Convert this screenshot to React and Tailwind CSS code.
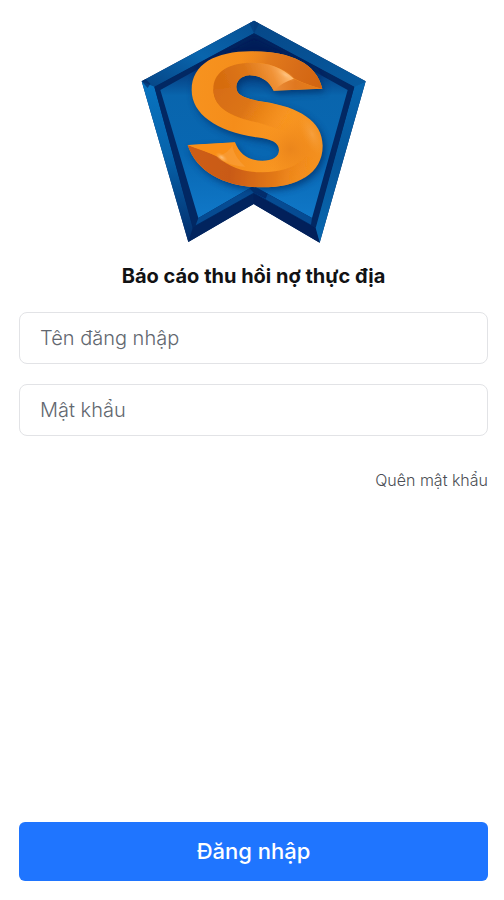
import React, { useState } from 'react'

const S_SHAPE =
  'M576 234 L430 240 C416 208 388 194 358 194 C332 195 318 212 318 229 C318 254 342 264 400 273 C505 289 577 330 577 405 C577 490 500 530 395 530 C290 530 200 488 172 403 L314 395 C328 430 352 450 396 450 C426 450 446 440 446 418 C446 396 425 386 378 380 C258 362 184 310 184 238 C184 160 256 122 362 122 C478 122 558 156 576 234 Z'

function Logo() {
  return (
    <svg viewBox="32 28 678 672" className="w-[226px] h-56" role="img" aria-label="Logo">
      <defs>
        <linearGradient id="face" x1="0" y1="0" x2="0" y2="1">
          <stop offset="0" stopColor="#02205a" />
          <stop offset="0.16" stopColor="#053577" />
          <stop offset="0.32" stopColor="#0965ad" />
          <stop offset="0.65" stopColor="#0867b2" />
          <stop offset="1" stopColor="#1078c8" />
        </linearGradient>
        <linearGradient id="topLeftEdge" x1="1" y1="0" x2="0" y2="1">
          <stop offset="0" stopColor="#075093" />
          <stop offset="0.5" stopColor="#0965ad" />
          <stop offset="1" stopColor="#064484" />
        </linearGradient>
        <linearGradient id="topRightEdge" x1="0" y1="0" x2="1" y2="1">
          <stop offset="0" stopColor="#064788" />
          <stop offset="1" stopColor="#075a9f" />
        </linearGradient>
        <linearGradient id="leftEdge" x1="0" y1="0" x2="0" y2="1">
          <stop offset="0" stopColor="#0873c0" />
          <stop offset="0.45" stopColor="#0764ac" />
          <stop offset="1" stopColor="#032d6b" />
        </linearGradient>
        <linearGradient id="rightEdge" x1="0" y1="0" x2="0" y2="1">
          <stop offset="0" stopColor="#0764ad" />
          <stop offset="0.5" stopColor="#06569b" />
          <stop offset="1" stopColor="#0968b0" />
        </linearGradient>
        <linearGradient id="body" x1="0" y1="0" x2="1" y2="0.25">
          <stop offset="0" stopColor="#f79420" />
          <stop offset="0.45" stopColor="#f58d1a" />
          <stop offset="0.8" stopColor="#f99722" />
          <stop offset="1" stopColor="#f3901f" />
        </linearGradient>
        <linearGradient id="topCap" gradientUnits="userSpaceOnUse" x1="320" y1="130" x2="570" y2="230">
          <stop offset="0" stopColor="#f28d20" stopOpacity="0" />
          <stop offset="0.35" stopColor="#e27a1b" />
          <stop offset="0.7" stopColor="#d76c18" />
          <stop offset="1" stopColor="#d2640f" />
        </linearGradient>
        <linearGradient id="innerTop" gradientUnits="userSpaceOnUse" x1="300" y1="270" x2="480" y2="190">
          <stop offset="0" stopColor="#d66c10" />
          <stop offset="0.4" stopColor="#dd7617" />
          <stop offset="0.75" stopColor="#f09236" />
          <stop offset="1" stopColor="#ffbc74" />
        </linearGradient>
        <linearGradient id="middle" gradientUnits="userSpaceOnUse" x1="270" y1="220" x2="480" y2="350">
          <stop offset="0" stopColor="#d76d12" />
          <stop offset="0.4" stopColor="#dc7413" />
          <stop offset="1" stopColor="#f58f1c" stopOpacity="0" />
        </linearGradient>
        <linearGradient id="topFacet" gradientUnits="userSpaceOnUse" x1="440" y1="230" x2="575" y2="232">
          <stop offset="0" stopColor="#e98a35" />
          <stop offset="0.4" stopColor="#e07820" />
          <stop offset="1" stopColor="#e67c16" />
        </linearGradient>
        <linearGradient id="bottomCap" gradientUnits="userSpaceOnUse" x1="200" y1="440" x2="545" y2="480">
          <stop offset="0" stopColor="#cd5d14" />
          <stop offset="0.3" stopColor="#c95a13" />
          <stop offset="0.7" stopColor="#e47a17" />
          <stop offset="1" stopColor="#f28b1b" stopOpacity="0" />
        </linearGradient>
        <radialGradient id="lowShade" gradientUnits="userSpaceOnUse" cx="480" cy="415" r="95">
          <stop offset="0" stopColor="#e8821a" stopOpacity="0.8" />
          <stop offset="1" stopColor="#f48a18" stopOpacity="0" />
        </radialGradient>
        <radialGradient id="glow">
          <stop offset="0" stopColor="#ffd09a" />
          <stop offset="1" stopColor="#ffad4c" stopOpacity="0" />
        </radialGradient>
        <filter id="soft" x="-20%" y="-20%" width="140%" height="140%">
          <feGaussianBlur stdDeviation="11" />
        </filter>
        <filter id="smooth" x="-10%" y="-10%" width="120%" height="120%">
          <feGaussianBlur stdDeviation="2" />
        </filter>
        <clipPath id="sClip">
          <path d={S_SHAPE} />
        </clipPath>
        <clipPath id="faceClip">
          <path d="M371 68 L672 228 L556 660 L370 549 L188 656 L72 228 Z" />
        </clipPath>
      </defs>

      {/* Outer bevel */}
      <path d="M371 30 L706 212 L568 696 L370 580 L174 694 L34 212 Z" fill="#032a66" />
      <path d="M371 30 L34 212 L72 230 L371 68 Z" fill="url(#topLeftEdge)" />
      <path d="M371 30 L706 212 L672 230 L371 68 Z" fill="url(#topRightEdge)" />
      <path d="M34 212 L174 694 L188 656 L72 228 Z" fill="url(#leftEdge)" />
      <path d="M706 212 L568 696 L554 652 L672 228 Z" fill="url(#rightEdge)" />
      <path d="M174 694 L370 580 L370 549 L188 650 Z" fill="#02245e" />
      <path d="M568 696 L370 580 L370 549 L556 652 Z" fill="#02205a" />
      <path d="M34 212 L46 205 L60 219 L52 232 Z" fill="#032a66" opacity="0.7" />
      <path d="M357 38 L371 30 L386 38 L371 68 Z" fill="#04397a" opacity="0.6" />

      {/* Inner bevel and face */}
      <path d="M371 68 L672 228 L556 652 L370 549 L188 652 L72 228 Z" fill="#022863" />
      <path d="M371 82 L652 238 L545 622 L370 526 L204 622 L90 238 Z" fill="url(#face)" />
      <g clipPath="url(#faceClip)">
        <path d="M371 74 L220 156 L205 185 L300 150 L470 140 L580 205 L530 155 Z" fill="#021f58" filter="url(#soft)" />
        <path d="M204 622 L370 526 L545 622 L542 642 L370 546 L196 644 Z" fill="#064b92" />
        <path d="M358 533 L370 526 L412 549 L406 564 L370 546 Z" fill="#032d6d" />
        <path d={S_SHAPE} fill="#02306c" opacity="0.75" transform="translate(7 10)" filter="url(#soft)" />
      </g>

      {/* Letter */}
      <path d={S_SHAPE} fill="url(#body)" />
      <g clipPath="url(#sClip)">
        <path d="M300 116 C400 102 590 100 590 240 C550 228 515 217 490 203 C450 165 400 152 345 157 Z" fill="url(#topCap)" />
        <g filter="url(#smooth)">
          <path d="M490 204 C450 165 400 152 345 157 C285 162 249 190 249 236 C249 270 270 292 300 308 L360 268 L318 229 L358 194 L430 240 Z" fill="url(#innerTop)" />
          <path d="M249 236 C249 290 300 320 385 336 L520 380 L540 300 L400 273 C342 264 318 254 318 229 Z" fill="url(#middle)" />
        </g>
        <circle cx="480" cy="415" r="95" fill="url(#lowShade)" />
        <path d="M430 240 C448 222 470 210 490 204 C520 218 550 228 576 234 Z" fill="url(#topFacet)" />
        <ellipse cx="466" cy="193" rx="34" ry="12" fill="url(#glow)" opacity="0.6" transform="rotate(32 466 193)" />
        <path d="M165 400 C200 415 235 424 262 438 C305 478 370 492 435 482 C480 474 510 458 530 435 L600 460 L500 545 L290 545 L150 480 Z" fill="url(#bottomCap)" filter="url(#smooth)" />
        <path d="M172 403 L314 395 C307 414 287 430 262 438 C235 424 205 414 172 403 Z" fill="#f98f18" />
        <path d="M262 438 C282 432 300 418 306 404 C310 430 325 450 345 468 C310 466 285 458 262 438 Z" fill="#fdb25c" opacity="0.3" filter="url(#smooth)" />
        <ellipse cx="274" cy="440" rx="22" ry="11" fill="url(#glow)" opacity="0.7" transform="rotate(35 274 440)" />
        <ellipse cx="545" cy="370" rx="30" ry="70" fill="url(#glow)" opacity="0.25" transform="rotate(-25 545 370)" />
      </g>
    </svg>
  )
}

function TextField({ type, label, value, onChange }) {
  return (
    <input
      type={type}
      aria-label={label}
      placeholder={label}
      value={value}
      onChange={(e) => onChange(e.target.value)}
      className="block w-full h-[52px] px-5 text-xl font-light text-gray-800 placeholder:text-[#62676f] bg-white border border-[#e2e3e6] rounded-lg outline-none focus:border-[#1f75ff]"
    />
  )
}

function App() {
  const [username, setUsername] = useState('')
  const [password, setPassword] = useState('')

  const handleSubmit = (e) => {
    e.preventDefault()
  }

  return (
    <div className="min-h-screen flex flex-col bg-white pt-5 pb-[19px] pl-[19px] pr-4 font-['Inter',sans-serif]">
      <div className="flex justify-center">
        <Logo />
      </div>

      <h1 className="mt-[18px] text-center text-xl leading-7 font-bold text-[#111214]">
        Báo cáo thu hồi nợ thực địa
      </h1>

      <form onSubmit={handleSubmit} className="mt-[22px] flex-1 flex flex-col">
        <div className="flex flex-col gap-5">
          <TextField type="text" label="Tên đăng nhập" value={username} onChange={setUsername} />
          <TextField type="password" label="Mật khẩu" value={password} onChange={setPassword} />
        </div>

        <a href="#forgot" className="mt-8 self-end text-base leading-6 font-light text-[#4b4e54]">
          Quên mật khẩu
        </a>

        <button
          type="submit"
          className="mt-auto w-full h-[59px] rounded-md bg-[#1f75ff] text-white text-[22px] font-medium"
        >
          Đăng nhập
        </button>
      </form>
    </div>
  )
}

export default App
